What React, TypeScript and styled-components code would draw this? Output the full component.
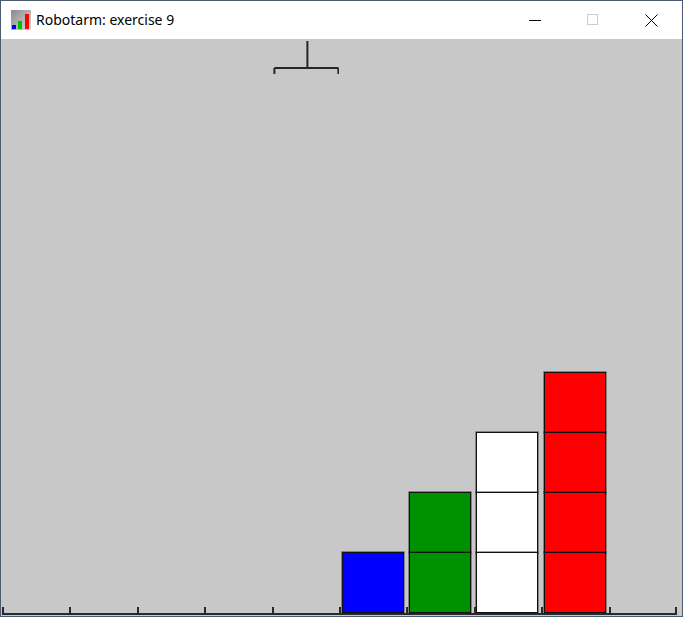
import React from 'react';
import styled, { createGlobalStyle } from 'styled-components';

const SLOT = 67.4;

const Global = createGlobalStyle`
  html, body {
    margin: 0;
    padding: 0;
    background: #ffffff;
  }
`;

const Window = styled.div`
  width: 683px;
  height: 617px;
  box-sizing: border-box;
  border: 1px solid #4a5a70;
  display: flex;
  flex-direction: column;
  background: #ffffff;
`;

const TitleBar = styled.div`
  height: 38px;
  flex: none;
  display: flex;
  align-items: center;
  background: #ffffff;
  padding-left: 10px;
  padding-right: 2px;
`;

const AppIcon = styled.svg`
  width: 20px;
  height: 20px;
  flex: none;
`;

const Title = styled.span`
  margin-left: 5px;
  font-family: "Noto Sans", "Open Sans", sans-serif;
  font-size: 14px;
  color: #000000;
  flex: 1;
  padding-bottom: 1px;
`;

const Caption = styled.div`
  display: flex;
  height: 100%;
`;

const CaptionButton = styled.div`
  width: 58px;
  height: 100%;
  display: flex;
  align-items: center;
  justify-content: center;
`;

const Canvas = styled.div`
  flex: 1;
  background: #c8c8c8;
  display: flex;
  flex-direction: column;
  justify-content: space-between;
`;

const ArmRow = styled.div`
  padding-left: 1px;
  display: flex;
`;

const Arm = styled.svg<{ $slot: number }>`
  width: ${SLOT}px;
  height: 36px;
  margin-left: ${p => p.$slot * SLOT}px;
`;

const Floor = styled.div`
  display: flex;
  align-items: flex-end;
  padding-left: 1px;
  margin-bottom: 1px;
  position: relative;

  &::after {
    content: '';
    position: absolute;
    left: ${10 * SLOT}px;
    bottom: 0;
    width: 2px;
    height: 8px;
    background: #2a2a2a;
  }
`;

const Slot = styled.div`
  width: ${SLOT}px;
  flex: none;
  display: flex;
  flex-direction: column;
  align-items: center;
  border-bottom: 2px solid #2a2a2a;
  position: relative;

  &::before {
    content: '';
    position: absolute;
    left: 0;
    bottom: -2px;
    width: 2px;
    height: 8px;
    background: #2a2a2a;
  }
`;

const Block = styled.div<{ $color: string }>`
  width: 62px;
  height: 61px;
  box-sizing: border-box;
  border: 1px solid #101010;
  box-shadow: 0 0 0 0.8px rgba(30, 30, 30, 0.5);
  background: ${p => p.$color};
  margin-top: -1px;

  &:first-child {
    margin-top: 0;
  }
`;

const COLORS: Record<string, string> = {
  b: '#0000ff',
  g: '#009100',
  w: '#ffffff',
  r: '#ff0000',
};

const stacks: string[][] = [
  [], [], [], [], [],
  ['b'],
  ['g', 'g'],
  ['w', 'w', 'w'],
  ['r', 'r', 'r', 'r'],
  [],
];

export default function App() {
  return (
    <>
      <Global />
      <Window>
        <TitleBar>
          <AppIcon viewBox="0 0 20 20">
            <defs>
              <linearGradient id="ig" x1="0" y1="0" x2="1" y2="1">
                <stop offset="0" stopColor="#8a8a8a" />
                <stop offset="1" stopColor="#d8d8d8" />
              </linearGradient>
            </defs>
            <rect x="0" y="0" width="20" height="20" fill="url(#ig)" />
            <rect x="1" y="15" width="4" height="4" fill="#0000ff" />
            <rect x="7" y="11" width="4" height="8" fill="#00c000" />
            <rect x="14" y="4" width="4" height="15" fill="#ff0000" />
          </AppIcon>
          <Title>Robotarm: exercise 9</Title>
          <Caption>
            <CaptionButton>
              <svg width="12" height="12" viewBox="0 0 12 12">
                <line x1="0" y1="6.5" x2="12" y2="6.5" stroke="#000" strokeWidth="1" />
              </svg>
            </CaptionButton>
            <CaptionButton>
              <svg width="12" height="12" viewBox="0 0 12 12">
                <rect x="0.5" y="0.5" width="10" height="10" fill="none" stroke="#cccccc" strokeWidth="1" />
              </svg>
            </CaptionButton>
            <CaptionButton>
              <svg width="13" height="13" viewBox="0 0 13 13">
                <path d="M0.5 0.5 L12.5 12.5 M12.5 0.5 L0.5 12.5" stroke="#000" strokeWidth="1" fill="none" />
              </svg>
            </CaptionButton>
          </Caption>
        </TitleBar>
        <Canvas>
          <ArmRow>
            <Arm $slot={4} viewBox={`0 0 ${SLOT} 36`}>
              <path
                d="M35.4 2 V29 M2.4 29 H66.4 M2.4 29 V35 M66.4 29 V35"
                stroke="#262626"
                strokeWidth="2"
                fill="none"
              />
            </Arm>
          </ArmRow>
          <Floor>
            {stacks.map((stack, i) => (
              <Slot key={i}>
                {[...stack].reverse().map((c, j) => (
                  <Block key={j} $color={COLORS[c]} />
                ))}
              </Slot>
            ))}
          </Floor>
        </Canvas>
      </Window>
    </>
  );
}
